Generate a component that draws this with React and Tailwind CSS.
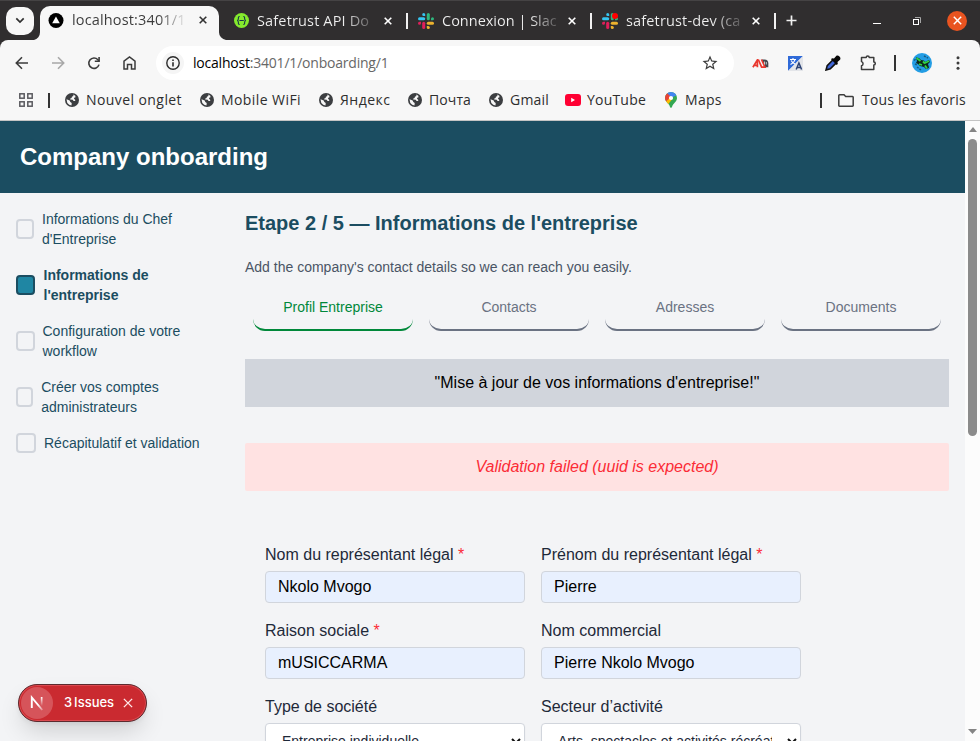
import React from "react";
import { MdStarBorder } from "react-icons/md";

const uiFont = "font-['Open_Sans','Noto_Sans',sans-serif]";

function Globe() {
  return (
    <svg width="14" height="14" viewBox="0 0 14 14" className="shrink-0">
      <circle cx="7" cy="7" r="7" fill="#3c3e41" />
      <path d="M8.300 1.600 8.400 2.900 6.900 3.700 6.600 4.900 5.300 5.400 5.200 6.500 7.700 6.700 8.600 7.900 10.100 8.100 10.300 6.900 9.300 6.100 8.900 5 10.500 4.200 10.300 2.700Z" fill="#f7f7f7" />
      <path d="M1.500 6.300 4.700 7.500 5.300 9 6.700 9.900 6.500 12.500 4.200 11.700 2.300 9.900Z" fill="#f7f7f7" />
    </svg>
  );
}

function YouTube() {
  return (
    <svg width="16" height="12" viewBox="0 0 16 12" className="shrink-0">
      <rect width="16" height="12" rx="3" fill="#ff0033" />
      <path d="M6.200 3.700v4.600L10 6Z" fill="#fff" />
    </svg>
  );
}

function MapsPin() {
  return (
    <svg width="12" height="16" viewBox="0 0 12 16" className="shrink-0">
      <defs>
        <clipPath id="pin">
          <path d="M6 0a6 6 0 0 1 6 6c0 3.200-2.600 4.700-3.900 6.600C7.200 14 7 16 6 16s-1.200-2-2.100-3.400C2.600 10.700 0 9.200 0 6a6 6 0 0 1 6-6Z" />
        </clipPath>
      </defs>
      <g clipPath="url(#pin)">
        <rect width="12" height="16" fill="#34a853" />
        <path d="M3 0H12V3L6 6 2 2Z" fill="#4285f4" />
        <path d="M0 9.500 4.500 5 7 7.500 2.500 13Z" fill="#fbbc04" />
        <path d="M0 2 2 1 6 5 1 9.500 0 8Z" fill="#ea4335" />
      </g>
      <circle cx="6" cy="6" r="2.100" fill="#fff" />
    </svg>
  );
}

function Slack({ alert = false }) {
  return (
    <svg width="16" height="16" viewBox="0 0 16 16" className="shrink-0">
      <g fill="#36c5f0">
        <rect x="0" y="4.200" width="7.200" height="3" rx="1.500" />
        <path d="M5.700 0a1.500 1.500 0 0 1 1.500 1.500V3H5.700a1.500 1.500 0 0 1 0-3Z" />
      </g>
      <g fill="#2eb67d">
        <rect x="8.800" y="0" width="3" height="7.200" rx="1.500" />
        <path d="M16 5.700a1.500 1.500 0 0 1-1.500 1.500H13V5.700a1.500 1.500 0 0 1 3 0Z" />
      </g>
      <g fill="#ecb22e">
        <rect x="8.800" y="8.800" width="7.200" height="3" rx="1.500" />
        <path d="M10.300 16a1.500 1.500 0 0 1-1.500-1.500V13h1.500a1.500 1.500 0 0 1 0 3Z" />
      </g>
      <g fill="#e01e5a">
        <rect x="4.200" y="8.800" width="3" height="7.200" rx="1.500" />
        <path d="M0 10.300a1.500 1.500 0 0 1 1.500-1.500H3v1.500a1.500 1.500 0 0 1-3 0Z" />
      </g>
      {alert && <circle cx="13" cy="3" r="3" fill="#ff0000" />}
    </svg>
  );
}

function Cross({ color = "#fff", size = 8, w = 1.6 }) {
  return (
    <svg width={size} height={size} viewBox="0 0 8 8" className="shrink-0">
      <path d="M.7.7 7.300 7.300M7.300.7.7 7.300" stroke={color} strokeWidth={w} fill="none" />
    </svg>
  );
}

function Tab({ icon, title, spacing, width, end = "mr-[14px]" }) {
  return (
    <div className={"flex h-10 shrink-0 items-center " + width}>
      {icon}
      <span className={"ml-[8px] whitespace-nowrap bg-clip-text text-[14.500px] leading-5 text-transparent " + spacing}>
        {title}
      </span>
      <span className={"ml-auto flex " + end}><Cross /></span>
    </div>
  );
}

function TabStrip() {
  return (
    <div className="flex h-10 w-full items-center border-t border-[#454344] bg-[#302e2f]">
      <div className="ml-[6px] flex h-7 w-7 shrink-0 items-center justify-center rounded-[10px] bg-[#f7f7f7]">
        <svg width="10" height="7" viewBox="0 0 10 7"><path d="M1.300 1.300 5 5 8.700 1.300" fill="none" stroke="#303030" strokeWidth="1.700" /></svg>
      </div>
      <svg width="6" height="8" viewBox="0 0 6 8" className="shrink-0 self-end"><path d="M6 0A7 8 0 0 1 0 8H6Z" fill="#f7f7f7" /></svg>
      <div className="flex h-[34px] w-[179px] shrink-0 items-center self-end rounded-t-[10px] bg-[#f7f7f7] pb-[6px] pl-[8px] pr-[12px]">
        <svg width="16" height="15" viewBox="0 0 16 15" className="shrink-0"><circle cx="8" cy="7.500" r="7.500" fill="#000" /><path d="M8 3.500 11.800 10.200H4.200Z" fill="#fff" /></svg>
        <span className="ml-[8px] whitespace-nowrap bg-[linear-gradient(to_right,#3a3a3a_86px,#ececec_114px)] bg-clip-text text-[14.500px] leading-5 tracking-[0.150px] text-transparent">localhost:3401/1</span>
        <span className="ml-auto flex"><Cross color="#333" /></span>
      </div>
      <svg width="7" height="8" viewBox="0 0 7 8" className="shrink-0 self-end"><path d="M0 0A8 8 0 0 0 7 8H0Z" fill="#f7f7f7" /></svg>
      <Tab
        width="w-[181px] pl-[8px]"
        end="mr-[15px]"
        spacing="tracking-[0.150px] bg-[linear-gradient(to_right,#f1f1f1_86px,#302e2f_122px)]"
        title="Safetrust API Do"
        icon={
          <svg width="15" height="15" viewBox="0 0 15 15" className="shrink-0">
            <circle cx="7.500" cy="7.500" r="7.500" fill="#85ea2d" />
            <path d="M5.700 3.500c-1.500 0-1.300.8-1.300 2 0 1.200-.2 1.800-1.200 2 1 .2 1.200.8 1.200 2s-.2 2 1.300 2M9.300 3.500c1.500 0 1.300.8 1.300 2 0 1.200.2 1.800 1.200 2-1 .2-1.200.8-1.200 2s.2 2-1.300 2M5.400 7.500h4.400" fill="none" stroke="#173647" strokeWidth="1.100" />
          </svg>
        }
      />
      <div className="-ml-px h-4 w-[2px] shrink-0 bg-[#f1f1f1]" />
      <Tab width="w-[182px] pl-[10px]" spacing="tracking-[0px] bg-[linear-gradient(to_right,#f1f1f1_88px,#302e2f_122px)]" title="Connexion | Slac" icon={<Slack />} />
      <div className="h-4 w-[2px] shrink-0 bg-[#f1f1f1]" />
      <Tab width="w-[182px] pl-[10px]" spacing="tracking-[0.150px] bg-[linear-gradient(to_right,#f1f1f1_86px,#302e2f_122px)]" title="safetrust-dev (ca" icon={<Slack alert />} />
      <div className="h-4 w-[2px] shrink-0 bg-[#f1f1f1]" />
      <svg width="11" height="11" viewBox="0 0 11 11" className="ml-[10px] shrink-0"><path d="M5.500.5v10M.5 5.500h10" stroke="#f1f1f1" strokeWidth="1.700" /></svg>
      <div className="ml-auto flex items-center pr-[13px]">
        <div className="mr-[32px] mt-[5px] h-px w-2 bg-white" />
        <svg width="8" height="8" viewBox="0 0 8 8" className="mr-[26px]"><rect x=".5" y="2.500" width="5" height="5" fill="none" stroke="#fff" /><path d="M2 .5h5.500V6" fill="none" stroke="#a5a5a5" /></svg>
        <div className="flex h-5 w-5 items-center justify-center rounded-full bg-[#e95420]"><Cross size={9} w={1.300} /></div>
      </div>
    </div>
  );
}

function Toolbar() {
  return (
    <div className="flex h-[46px] items-center">
      <svg width="14" height="14" viewBox="0 0 14 14" className="ml-[15px] shrink-0"><path d="M13 7H1.500M7 1.300 1.300 7 7 12.700" fill="none" stroke="#3c3c3c" strokeWidth="1.600" /></svg>
      <svg width="14" height="14" viewBox="0 0 14 14" className="ml-[22px] shrink-0"><path d="M1 7h11.500M7 1.300 12.700 7 7 12.700" fill="none" stroke="#a8a8a8" strokeWidth="1.600" /></svg>
      <svg width="14" height="14" viewBox="0 0 14 14" className="ml-[22px] shrink-0"><path d="M12 8.600A5.200 5.200 0 1 1 10.900 3.700L12 4.900" fill="none" stroke="#3c3c3c" strokeWidth="1.600" /><path d="M12.100 1V5.300H7.800" fill="none" stroke="#3c3c3c" strokeWidth="1.600" /></svg>
      <svg width="13" height="14" viewBox="0 0 13 14" className="ml-[22px] shrink-0"><path d="M1 5.200 6.500 1 12 5.200V13H8.500V8.500h-4V13H1Z" fill="none" stroke="#3c3c3c" strokeWidth="1.500" /></svg>
      <div className="ml-[20px] flex h-[34px] w-[578px] shrink-0 items-center rounded-full bg-white pl-[6px] pr-[15px]">
        <div className="mr-px flex h-[22px] w-[22px] items-center justify-center rounded-full bg-[#f5f5f5]">
          <svg width="14" height="14" viewBox="0 0 14 14"><circle cx="7" cy="7" r="6.200" fill="none" stroke="#2b2b2b" strokeWidth="1.400" /><path d="M7 6.200v4.200M7 3.400V5" stroke="#2b2b2b" strokeWidth="1.600" /></svg>
        </div>
        <span className="ml-[8px] text-[14px] leading-5 tracking-[-0.210px] text-[#676767]"><span className="text-black">localhost</span>:3401/1/onboarding/1</span>
        <MdStarBorder className="ml-auto h-[18px] w-[18px] text-[#3c3c3c]" />
      </div>
      <svg width="17" height="9" viewBox="0 0 17 9" className="ml-[18px] shrink-0">
        <path d="M9.500.5h3A3.800 3.800 0 0 1 16.300 4.300v3.900H13Z" fill="#43494f" />
        <path d="M.9 8.300 5.400.9V8.300M2.500 6.300H5.400" fill="none" stroke="#e9382f" strokeWidth="1.700" />
        <path d="M6.300.5 9.600 8.200H13L9.500.5" fill="none" stroke="#e9382f" strokeWidth="1.700" />
        <path d="M12.500 2.500v3M14.300 3v2.500" stroke="#e8e8e8" strokeWidth=".8" />
      </svg>
      <svg width="15" height="15" viewBox="0 0 15 15" className="ml-[19px] shrink-0"><path d="M0 0h15L0 15Z" fill="#2f6ad8" /><path d="M15 0v15H0Z" fill="#e3e5e9" /><path d="M2 3.500h6M5 2v1.500M7 3.500C6.500 6 4.500 7.500 2.500 8.500M3.200 4.500C4 6.500 5.500 7.500 7 8" fill="none" stroke="#fff" strokeWidth="1.100" /><path d="m8.200 13.500 2.700-6.500 2.700 6.500M9.200 11.500h3.400" fill="none" stroke="#2b4274" strokeWidth="1.500" /></svg>
      <svg width="16" height="16" viewBox="0 0 16 16" className="ml-[22px] shrink-0"><path d="M8.300 4.500 2.200 10.600 1 15l4.300-1.200 6.200-6.200" fill="#3f66d8" stroke="#111" strokeWidth="1.600" /><path d="M7 3.200 9 3.600 11.200 1C13-.7 16.700 2.500 15 4.700L12.500 7l.3 2-1.100 1L6 4.300Z" fill="#080808" /></svg>
      <svg width="17" height="17" viewBox="0 0 17 17" className="mb-[2px] ml-[19px] shrink-0"><path d="M1.500 3.500H6.200a1.500 1.500 0 0 1 3 0h4.600V8a1.500 1.500 0 0 1 0 3v4.500H1.500v-3.700a2.200 2.200 0 0 0 0-4.200Z" fill="none" stroke="#3c3c3c" strokeWidth="1.500" strokeLinejoin="round" /></svg>
      <div className="ml-[17px] h-4 w-[2px] shrink-0 bg-[#333]" />
      <svg width="20" height="20" viewBox="0 0 20 20" className="ml-[16px] shrink-0"><circle cx="10" cy="10" r="10" fill="#239de4" /><path d="M2 7.500 5 5M5 14l4 3M12 3l4 2M3 11l2 1M14 15l3-2" stroke="#175b83" strokeWidth="1.500" strokeDasharray="2 1" /><path d="m4 4.500 3 .5 2 2 3 .5 1 1.500 4-2 1 2-2 2 1 4-3 1-2-2-4-1-2-2-2-1 1-2Z" fill="#0d291c" /><path d="m4.500 5 4 3M7 11l3 1M11 8.500l2 2M13 10l4-2M13 12.500l2 3" stroke="#31d343" strokeWidth="1.800" /></svg>
      <svg width="4" height="14" viewBox="0 0 4 14" className="ml-[24px] shrink-0"><g fill="#3c3c3c"><circle cx="2" cy="1.700" r="1.500" /><circle cx="2" cy="7" r="1.500" /><circle cx="2" cy="12.300" r="1.500" /></g></svg>
    </div>
  );
}

const bookmarks = [
  { label: "Nouvel onglet", width: "w-[135px]", icon: <Globe />, tracking: "tracking-[0.420px]" },
  { label: "Mobile WiFi", width: "w-[119px]", icon: <Globe />, tracking: "tracking-[0.420px]" },
  { label: "Яндекс", width: "w-[89px]", icon: <Globe />, tracking: "tracking-[0.500px]" },
  { label: "Почта", width: "w-[81px]", icon: <Globe />, tracking: "tracking-[0.100px]" },
  { label: "Gmail", width: "w-[76px]", icon: <Globe />, tracking: "tracking-[0.200px]" },
  { label: "YouTube", width: "w-[100px]", icon: <YouTube />, tracking: "tracking-[0.200px]" },
  { label: "Maps", width: "w-[80px]", icon: <MapsPin />, tracking: "tracking-[0.300px]" },
];

function BookmarkBar() {
  return (
    <div className="flex h-[34px] items-center pb-[6px] text-[14px] leading-5 text-[#2e2e2e]">
      <svg width="14" height="14" viewBox="0 0 14 14" className="ml-[19px] shrink-0"><g fill="none" stroke="#5a5a5f" strokeWidth="1.500"><rect x=".8" y=".8" width="4.400" height="4.400" /><rect x="8.800" y=".8" width="4.400" height="4.400" /><rect x=".8" y="8.800" width="4.400" height="4.400" /><rect x="8.800" y="8.800" width="4.400" height="4.400" /></g></svg>
      <div className="ml-[15px] mr-[15px] h-[15px] w-[2px] shrink-0 bg-[#333]" />
      {bookmarks.map((b) => (
        <div key={b.label} className={"flex shrink-0 items-center whitespace-nowrap " + b.width + " " + b.tracking}>
          {b.icon}
          <span className={b.label === "YouTube" ? "ml-[6px]" : b.label === "Maps" ? "ml-[8px]" : "ml-[7px]"}>{b.label}</span>
        </div>
      ))}
      <div className="ml-auto h-[15px] w-[2px] shrink-0 bg-[#333]" />
      <svg width="16" height="13" viewBox="0 0 16 13" className="ml-[16px] shrink-0"><path d="M.8 1.500a.7.7 0 0 1 .7-.7H6L7.700 2.500h6.800a.7.7 0 0 1 .7.7v8.300a.7.700 0 0 1-.7.7h-13a.7.700 0 0 1-.7-.7Z" fill="none" stroke="#3c3c3c" strokeWidth="1.500" /></svg>
      <span className="ml-[8px] w-[118px] shrink-0 whitespace-nowrap tracking-[0.200px]">Tous les favoris</span>
    </div>
  );
}

const steps = [
  { lines: ["Informations du Chef", "d'Entreprise"], box: "w-[18px]", gap: "gap-2" },
  { lines: ["Informations de", "l'entreprise"], box: "w-[19px]", gap: "gap-[8.500px]", active: true },
  { lines: ["Configuration de votre", "workflow"], box: "w-[19px]", gap: "gap-[7.500px]" },
  { lines: ["Créer vos comptes", "administrateurs"], box: "w-[17px]", gap: "gap-[8.200px]" },
  { lines: ["Récapitulatif et validation"], box: "w-[20px]", gap: "gap-2" },
];

function Sidebar() {
  return (
    <ul className="flex w-[245px] shrink-0 flex-col gap-4 pl-4 pt-4 text-sm text-[#1b4d61]">
      {steps.map((s) => (
        <li key={s.lines[0]} className={"flex items-center " + s.gap + (s.active ? " font-bold" : "")}>
          <span className={"h-5 shrink-0 rounded border-2 " + s.box + (s.active ? " border-[#1b4d61] bg-[#1f86a3]" : " border-[#d1d5dc]")} />
          <span className="whitespace-nowrap">
            {s.lines.map((l) => <span key={l} className="block">{l}</span>)}
          </span>
        </li>
      ))}
    </ul>
  );
}

function Field({ label, value, required = false, select = false }) {
  return (
    <div className="w-[260px]">
      <div className="h-7 text-base text-[#1e2939]">
        {label} {required && <span className="text-[#fb2c36]">*</span>}
      </div>
      {select ? (
        <div className="flex h-9 items-center rounded border border-[#d1d5dc] bg-white pl-4 pr-[3px] text-sm text-[#1e2939] shadow-xs">
          <span className="w-[214px] overflow-hidden whitespace-nowrap">{value}</span>
          <svg width="10" height="7" viewBox="0 0 10 7" className="ml-auto"><path d="m1 1 4 4 4-4" fill="none" stroke="#111" strokeWidth="2" /></svg>
        </div>
      ) : (
        <div className="flex h-8 items-center rounded border border-[#d1d5dc] bg-[#e8f0fe] px-3 text-base text-black">{value}</div>
      )}
    </div>
  );
}

function Main() {
  return (
    <main className="w-[704px] shrink-0">
      <h2 className="mt-4 text-xl font-bold text-[#1b4d61]">Etape 2 / 5 — Informations de l'entreprise</h2>
      <p className="mt-5 text-sm text-[#4a5565]">Add the company's contact details so we can reach you easily.</p>
      <div className="mt-[10px] grid grid-cols-4 text-center text-sm">
        <div className="mx-2 h-11 rounded-xl border-b-2 border-[#00883a] pt-[10px] text-[#00883a]">Profil Entreprise</div>
        <div className="mx-2 h-11 rounded-xl border-b-2 border-[#6a7282] pt-[10px] text-[#6a7282]">Contacts</div>
        <div className="mx-2 h-11 rounded-xl border-b-2 border-[#6a7282] pt-[10px] text-[#6a7282]">Adresses</div>
        <div className="mx-2 h-11 rounded-xl border-b-2 border-[#6a7282] pt-[10px] text-[#6a7282]">Documents</div>
      </div>
      <div className="mt-7 flex h-12 items-center justify-center bg-[#d1d5dc] text-black">"Mise à jour de vos informations d'entreprise!"</div>
      <div className="mt-9 flex h-12 items-center justify-center rounded-[2px] bg-[#ffe2e2] italic text-[#fb2c36]">Validation failed (uuid is expected)</div>
      <div className="ml-5 mt-[52px] grid w-[536px] grid-cols-2 gap-4">
        <Field label="Nom du représentant légal" value="Nkolo Mvogo" required />
        <Field label="Prénom du représentant légal" value="Pierre" required />
        <Field label="Raison sociale" value="mUSICCARMA" required />
        <Field label="Nom commercial" value="Pierre Nkolo Mvogo" />
        <Field label="Type de société" value="Entreprise individuelle" select />
        <Field label="Secteur d’activité" value="Arts, spectacles et activités récréatives" select />
      </div>
    </main>
  );
}

function IssuesBadge() {
  return (
    <div className="absolute left-[18px] top-[684px] flex h-[38px] w-[129px] items-center rounded-full border border-[#5d2a2e] bg-[#ca2a30] pl-[2px] font-['Inter',sans-serif] shadow-[inset_0_0_0_1px_#dc4a50,0_12px_24px_-4px_rgba(0,0,0,0.16),0_2px_4px_rgba(0,0,0,0.06)]">
      <div className="flex h-8 w-8 items-center justify-center rounded-full bg-[#d6545a]">
        <svg width="14" height="16" viewBox="0 0 14 16">
          <defs>
            <linearGradient id="diag" x1="0" y1="0" x2="1" y2="1"><stop offset=".6" stopColor="#fff" /><stop offset="1" stopColor="#fff" stopOpacity=".3" /></linearGradient>
            <linearGradient id="stem" x1="0" y1="0" x2="0" y2="1"><stop offset="0" stopColor="#fff" /><stop offset="1" stopColor="#fff" stopOpacity="0" /></linearGradient>
          </defs>
          <path d="M1.800 13V2.500L12.300 15" fill="none" stroke="url(#diag)" strokeWidth="1.900" />
          <path d="M10.800 2h1.700v9h-1.700Z" fill="url(#stem)" />
        </svg>
      </div>
      <span className="ml-[11px] whitespace-nowrap text-[13px] font-medium text-white [word-spacing:-1.500px]">3 Issues</span>
      <span className="ml-auto mr-[13px] flex"><Cross size={10} w={1.100} color="#ffe8e8" /></span>
    </div>
  );
}

export default function App() {
  return (
    <div className="relative flex h-[741px] w-[980px] flex-col overflow-hidden bg-[#302e2f] font-['Liberation_Sans',Arial,sans-serif]">
      <div className={uiFont}>
        <TabStrip />
        <div className="h-[81px] rounded-t-[8px] border-b border-[#c4c4c4] bg-[#f7f7f7]">
          <Toolbar />
          <BookmarkBar />
        </div>
      </div>
      <div className="flex h-[620px]">
        <div className="w-[965px] shrink-0 overflow-hidden bg-[#f3f4f6]">
          <header className="flex h-[72px] items-center bg-[#1b4d61] pl-5 text-2xl font-bold text-white">Company onboarding</header>
          <div className="flex">
            <Sidebar />
            <Main />
          </div>
        </div>
        <div className="flex w-[15px] flex-col items-center bg-[#fcfcfc] pt-[6px]">
          <svg width="8" height="5" viewBox="0 0 8 5"><path d="M4 0 8 5H0Z" fill="#858585" /></svg>
          <div className="mt-[7px] h-[297px] w-[9px] rounded-full bg-[#8b8b8b]" />
          <svg width="9" height="5" viewBox="0 0 9 5" className="mb-[7px] mt-auto"><path d="M4.500 5 0 0h9Z" fill="#858585" /></svg>
        </div>
      </div>
      <IssuesBadge />
    </div>
  );
}
